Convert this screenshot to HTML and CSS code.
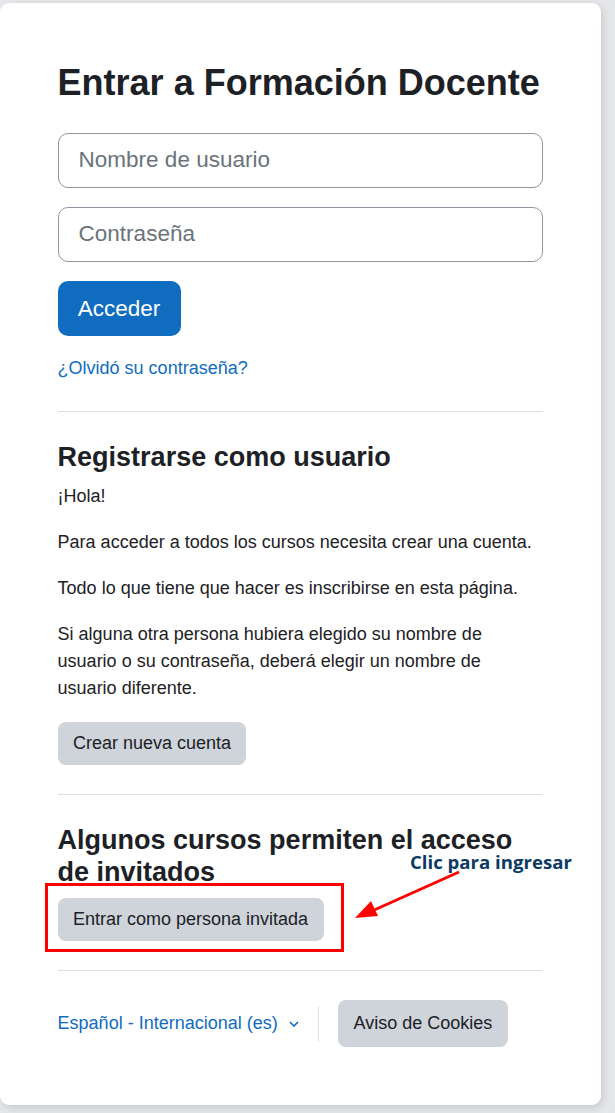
FILE: index.html
```html
<!DOCTYPE html>
<html lang="es">
<head>
    <meta charset="UTF-8">
    <meta name="viewport" content="width=device-width, initial-scale=1.0">
    <title>Formación Docente: Entrar al sitio</title>
    <link rel="stylesheet" href="styles.css">
</head>
<body>

    <div class="page">
        <div class="login-container">
            <h1 class="login-heading">Entrar a Formación Docente</h1>

            <form class="login-form">
                <input type="text" class="form-control" placeholder="Nombre de usuario">
                <input type="password" class="form-control" placeholder="Contraseña">
                <button type="button" class="btn btn-primary btn-lg">Acceder</button>
            </form>

            <div class="forgot">
                <a href="#">¿Olvidó su contraseña?</a>
            </div>

            <div class="login-divider"></div>

            <h2 class="section-heading">Registrarse como usuario</h2>
            <div class="instructions">
                <p>¡Hola!</p>
                <p>Para acceder a todos los cursos necesita crear una cuenta.</p>
                <p>Todo lo que tiene que hacer es inscribirse en esta página.</p>
                <p>Si alguna otra persona hubiera elegido su nombre de usuario o su contraseña, deberá elegir un nombre de usuario diferente.</p>
            </div>
            <button type="button" class="btn btn-secondary">Crear nueva cuenta</button>

            <div class="login-divider"></div>

            <h2 class="section-heading">Algunos cursos permiten el acceso de invitados</h2>
            <button type="button" class="btn btn-secondary">Entrar como persona invitada</button>

            <div class="login-divider"></div>

            <div class="login-footer">
                <a href="#" class="lang-menu">Español - Internacional (es)
                    <svg class="chevron" width="10" height="6" viewBox="0 0 10 6">
                        <path d="M1 1 L5 5 L9 1" fill="none" stroke="#0f6cbf" stroke-width="1.6"/>
                    </svg>
                </a>
                <div class="divider"></div>
                <button type="button" class="btn btn-secondary btn-cookies">Aviso de Cookies</button>
            </div>
        </div>

        <!-- annotation drawn over the screenshot -->
        <svg class="annotation" width="615" height="1113" viewBox="0 0 615 1113">
            <rect x="46.5" y="884.5" width="296" height="66" fill="none" stroke="#ff0000" stroke-width="3"/>
            <line x1="459" y1="872" x2="372" y2="911" stroke="#ff0000" stroke-width="3"/>
            <polygon points="355,918 371,901 378,916" fill="#ff0000"/>
        </svg>
        <div class="annotation-text">Clic para ingresar</div>
    </div>

</body>
</html>
```

FILE: styles.css
```css
body {
    font-family: "Liberation Sans", Arial, sans-serif;
    background-color: #e5e7ea;
    color: #1d2125;
    margin: 0;
    padding: 0;
}
.page {
    position: relative;
    width: 615px;
    height: 1113px;
    padding: 3px 0 0 0;
    box-sizing: border-box;
}
.login-container {
    width: 601px;
    box-sizing: border-box;
    padding: 57.6px;
    background-color: white;
    border-radius: 9px;
    box-shadow: 2px 3px 10px rgba(0,0,0,0.13);
}
.login-heading {
    font-size: 36px;
    font-weight: bold;
    line-height: 1.2;
    margin: 0 0 28.8px 0;
}
.login-form {
    display: flex;
    flex-direction: column;
    align-items: flex-start;
}
.form-control {
    width: 100%;
    box-sizing: border-box;
    height: 55px;
    padding: 9.6px 20px;
    margin: 0 0 19.2px 0;
    font-family: inherit;
    font-size: 22.5px;
    color: #1d2125;
    border: 1px solid #8f959e;
    border-radius: 10px;
    outline: none;
}
.form-control::placeholder {
    color: #6a737b;
}
.btn {
    font-family: inherit;
    font-size: 18px;
    line-height: 27px;
    padding: 7.2px 14.4px;
    border: 1px solid transparent;
    border-radius: 8px;
    cursor: pointer;
}
.btn-lg {
    font-size: 22.5px;
    line-height: 34px;
    padding: 9.6px 19.2px;
    border-radius: 10px;
}
.btn-primary {
    background-color: #0f6cbf;
    color: white;
}
.btn-secondary {
    background-color: #ced4da;
    color: #1d2125;
}
.forgot {
    margin-top: 19.2px;
    font-size: 18px;
    line-height: 27px;
}
a {
    color: #0f6cbf;
    text-decoration: none;
}
.login-divider {
    border-top: 1px solid #dee2e6;
    margin: 28.8px 0;
}
.section-heading {
    font-size: 27px;
    font-weight: bold;
    line-height: 32.4px;
    margin: 0 0 9.6px 0;
}
.instructions p {
    font-size: 18px;
    line-height: 27px;
    margin: 0 0 19.2px 0;
}
.login-footer {
    display: flex;
    align-items: stretch;
}
.lang-menu {
    display: flex;
    align-items: center;
    gap: 11px;
    font-size: 18px;
    line-height: 27px;
    padding: 10px 0;
}
.chevron {
    margin-top: 1px;
}
.divider {
    align-self: center;
    height: 36px;
    border-left: 1px solid #dee2e6;
    margin: 0 19.2px;
}
.btn-cookies {
    padding: 9px 14.4px;
}
.annotation {
    position: absolute;
    top: 0;
    left: 0;
    pointer-events: none;
}
.annotation-text {
    position: absolute;
    left: 410px;
    top: 850px;
    font-family: "Open Sans", "Noto Sans", sans-serif;
    font-weight: bold;
    font-size: 18.6px;
    line-height: 24px;
    color: #0b3a63;
    white-space: nowrap;
}
```
